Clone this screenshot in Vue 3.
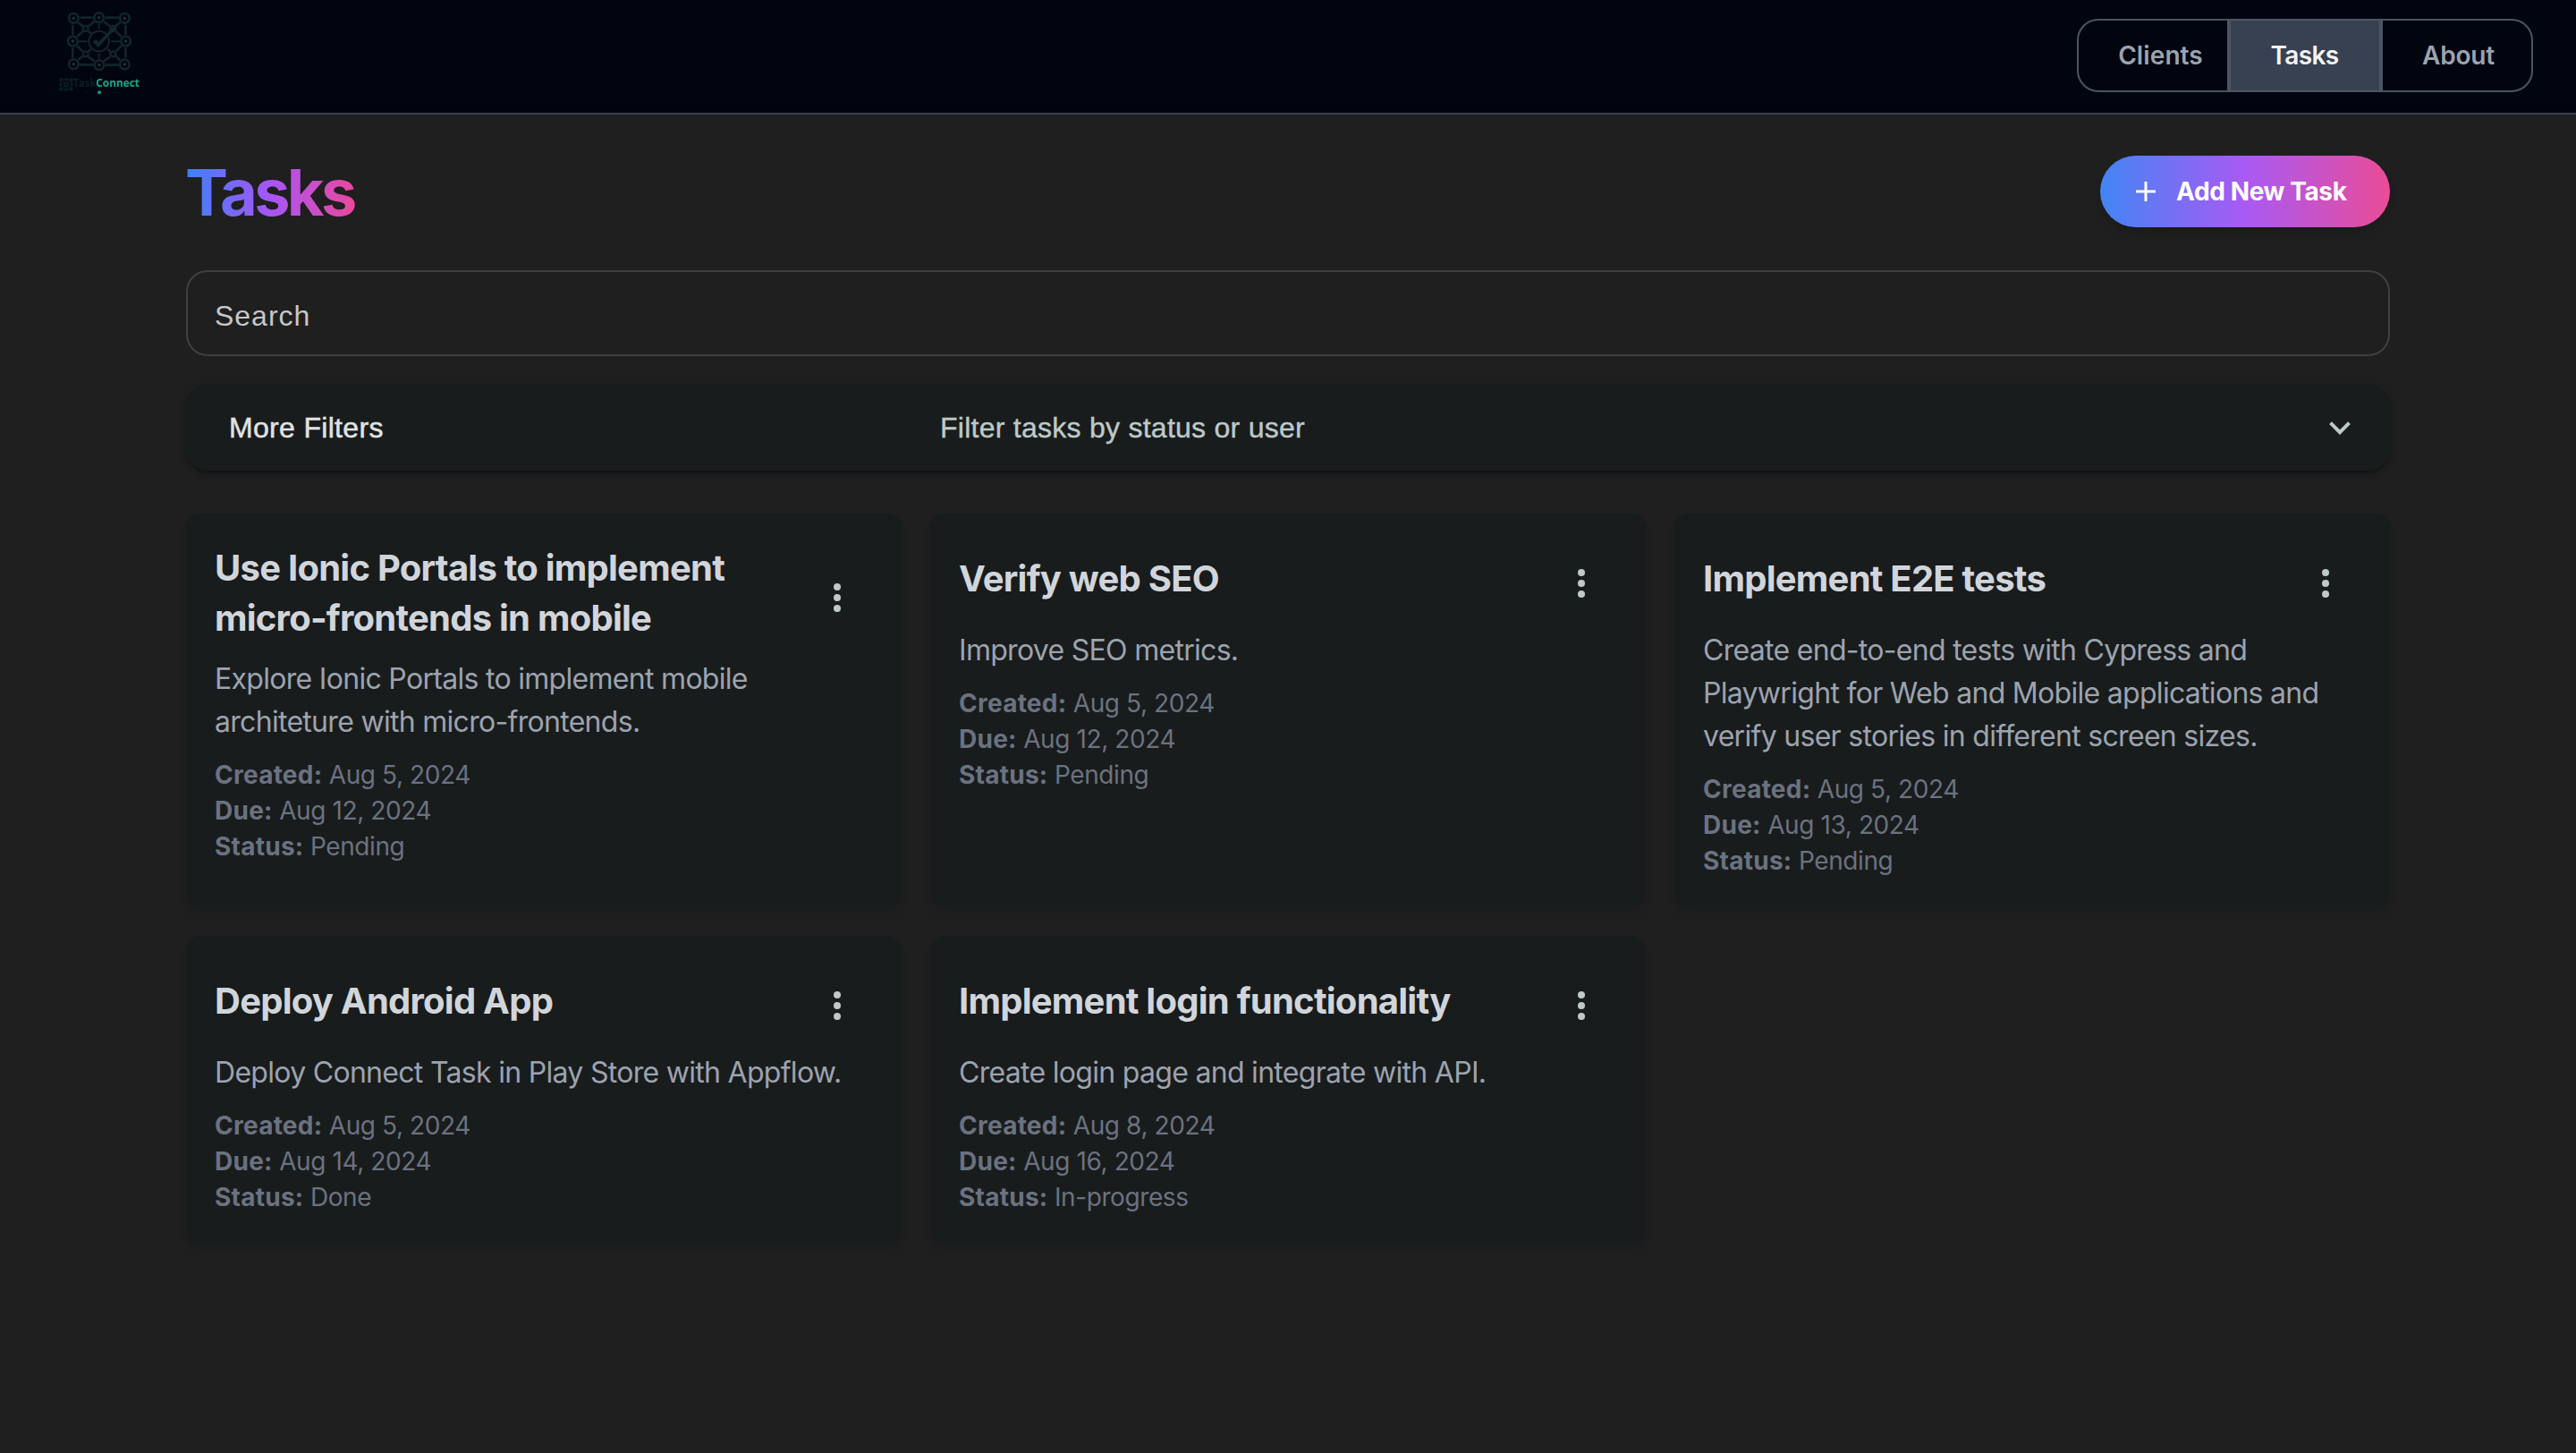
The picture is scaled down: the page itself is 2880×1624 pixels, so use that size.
<script setup>
const navItems = [
  { label: 'Clients', key: 'clients' },
  { label: 'Tasks', key: 'tasks', active: true },
  { label: 'About', key: 'about' },
]

const tasks = [
  {
    title: 'Use Ionic Portals to implement micro-frontends in mobile',
    description: 'Explore Ionic Portals to implement mobile architeture with micro-frontends.',
    created: 'Aug 5, 2024',
    due: 'Aug 12, 2024',
    status: 'Pending',
  },
  {
    title: 'Verify web SEO',
    description: 'Improve SEO metrics.',
    created: 'Aug 5, 2024',
    due: 'Aug 12, 2024',
    status: 'Pending',
  },
  {
    title: 'Implement E2E tests',
    description:
      'Create end-to-end tests with Cypress and Playwright for Web and Mobile applications and verify user stories in different screen sizes.',
    created: 'Aug 5, 2024',
    due: 'Aug 13, 2024',
    status: 'Pending',
  },
  {
    title: 'Deploy Android App',
    description: 'Deploy Connect Task in Play Store with Appflow.',
    created: 'Aug 5, 2024',
    due: 'Aug 14, 2024',
    status: 'Done',
  },
  {
    title: 'Implement login functionality',
    description: 'Create login page and integrate with API.',
    created: 'Aug 8, 2024',
    due: 'Aug 16, 2024',
    status: 'In-progress',
  },
]

const outerNodes = [
  [127, 61], [212, 59], [298, 61],
  [124, 138], [302, 138],
  [127, 215], [213, 218], [298, 216],
]
const innerNodes = [[167, 96], [259, 96], [167, 181], [259, 181]]
const miniNodes = [[84, 267], [102, 266], [120, 267], [84, 283], [120, 283], [84, 300], [102, 301], [120, 300]]
</script>

<template>
  <div class="page">
    <header class="topbar">
      <svg class="logo" viewBox="0 0 420 378" role="img" aria-label="TaskConnect">
        <g fill="none" stroke="#13242b" stroke-width="8">
          <path d="M148 59H191M233 59H278M146 217H192M234 218H278M124 83V116M124 160V194M301 83V116M301 160V194" />
          <path d="M144 139H172M252 139H282M212 80V98M212 179V196" stroke-width="6" />
          <path d="M142 75L159 89M176 88L197 72M228 72L250 88M268 88L283 75M142 200L159 188M176 190L197 205M228 205L250 190M268 189L283 202M138 123L158 105M138 153L158 173M268 105L288 123M268 173L288 153M175 104L186 112M175 172L186 165M250 172L240 165" />
          <circle v-for="([x, y], i) in outerNodes" :key="'o' + i" :cx="x" :cy="y" r="16" />
          <circle v-for="([x, y], i) in innerNodes" :key="'i' + i" :cx="x" :cy="y" r="9" stroke-width="7" />
          <circle cx="212" cy="138" r="34" stroke-width="6" />
        </g>
        <path d="M191 140L201 132L211 141L258 91L268 95L210 159Z" fill="#12282f" />
        <g fill="#1d343b">
          <circle v-for="([x, y], i) in outerNodes" :key="'d' + i" :cx="x" :cy="y" r="5" />
        </g>
        <g fill="none" stroke="#0b222b" stroke-width="3">
          <path d="M84 267H120V300H84ZM84 267L120 300M120 267L84 300" />
          <circle v-for="([x, y], i) in miniNodes" :key="'m' + i" :cx="x" :cy="y" r="4" />
          <circle cx="102" cy="283" r="8" />
        </g>
        <text x="125" y="291" textLength="77" lengthAdjust="spacingAndGlyphs" class="logo-text logo-task">Task</text>
        <text x="202" y="291" textLength="146" lengthAdjust="spacingAndGlyphs" class="logo-text logo-connect">Connect</text>
        <circle cx="213" cy="310" r="6" fill="#1a9580" />
        <path d="M166 310H174M252 310H258M264 310H270M276 310H281" stroke="#0b1c24" stroke-width="3" />
      </svg>
      <nav class="nav">
        <a v-for="n in navItems" :key="n.key" :class="['nav-item', n.key, { active: n.active }]">{{ n.label }}</a>
      </nav>
    </header>

    <main class="content">
      <div class="title-row">
        <h1>Tasks</h1>
        <button class="add" type="button">
          <svg viewBox="0 0 24 24"><path d="M12 1V23M1 12H23" stroke="#fff" stroke-width="3" /></svg>
          <span>Add New Task</span>
        </button>
      </div>

      <div class="search">Search</div>

      <div class="filters">
        <span class="filters-title">More Filters</span>
        <span class="filters-desc">Filter tasks by status or user</span>
        <svg class="chevron" viewBox="0 0 24 15"><path d="M1.5 1.7L12 12.2L22.5 1.7" fill="none" stroke="#bec9c8" stroke-width="4" /></svg>
      </div>

      <section class="grid">
        <article v-for="t in tasks" :key="t.title" class="card">
          <div class="card-head">
            <h2>{{ t.title }}</h2>
            <button class="menu" type="button" aria-label="Task menu">
              <svg viewBox="0 0 8 32"><circle cx="4" cy="4" r="4" /><circle cx="4" cy="16" r="4" /><circle cx="4" cy="28" r="4" /></svg>
            </button>
          </div>
          <p class="desc">{{ t.description }}</p>
          <div class="meta">
            <div><b>Created:</b> {{ t.created }}</div>
            <div><b>Due:</b> {{ t.due }}</div>
            <div><b>Status:</b> {{ t.status }}</div>
          </div>
        </article>
      </section>
    </main>
  </div>
</template>

<style>
body {
  background: #1f1f1f;
}
</style>

<style scoped>
.page {
  min-height: 1624px;
  background: #1f1f1f;
  font-family: Inter, 'Liberation Sans', sans-serif;
}
.topbar {
  box-sizing: border-box;
  height: 128px;
  padding: 0 48px 0 40px;
  display: flex;
  align-items: center;
  justify-content: space-between;
  background: #01050f;
  border-bottom: 2px solid #384152;
}
.logo {
  width: 140px;
  height: 126px;
}
.logo-text {
  font-family: 'Open Sans', sans-serif;
  font-size: 37px;
  font-weight: 700;
}
.logo-task {
  fill: #0b1c24;
}
.logo-connect {
  fill: #1ba389;
}
.nav {
  box-sizing: border-box;
  display: flex;
  width: 510px;
  height: 82px;
  margin-bottom: 2px;
}
.nav-item {
  box-sizing: border-box;
  width: 170px;
  border: 2px solid #4b5563;
  display: flex;
  align-items: center;
  justify-content: center;
  font-size: 28px;
  line-height: 40px;
  font-weight: 600;
  letter-spacing: -0.2px;
  color: #9ca3af;
}
.nav-item.clients {
  border-radius: 24px 0 0 24px;
  padding-left: 17px;
  letter-spacing: 0.1px;
}
.nav-item.about {
  border-radius: 0 24px 24px 0;
  padding-left: 3px;
}
.nav-item.active {
  background: #384152;
  color: #f3f4f6;
  letter-spacing: -0.6px;
  padding-right: 1px;
}
.content {
  width: 2464px;
  margin: 0 auto;
  padding-top: 46px;
}
.title-row {
  display: flex;
  justify-content: space-between;
  align-items: center;
  height: 80px;
}
h1 {
  margin: 2px 0 0 -1px;
  font-size: 72px;
  line-height: 80px;
  font-weight: 700;
  letter-spacing: -3.7px;
  padding-right: 3px;
  background: linear-gradient(to right, #3b82f6, #a855f7, #ec4899);
  -webkit-background-clip: text;
  background-clip: text;
  color: transparent;
}
.add {
  box-sizing: border-box;
  width: 324px;
  height: 80px;
  padding: 0 0 0 39px;
  border: 0;
  border-radius: 40px;
  display: flex;
  align-items: center;
  gap: 22px;
  background: linear-gradient(to right, #4285f4, #a95af4 50%, #ea4c96);
  box-shadow: 0 8px 12px -2px rgba(0, 0, 0, 0.1), 0 4px 8px -4px rgba(0, 0, 0, 0.1);
  color: #fff;
  font: 700 28px/40px Inter, sans-serif;
  letter-spacing: -0.38px;
}
.add svg {
  width: 24px;
  height: 24px;
}
.search {
  box-sizing: border-box;
  height: 96px;
  margin-top: 48px;
  padding: 6px 30px 0;
  border: 2px solid #404040;
  border-radius: 24px;
  display: flex;
  align-items: center;
  font: 400 32px/48px 'Liberation Sans', sans-serif;
  letter-spacing: 0.98px;
  color: #c7c7c7;
}
.filters {
  box-sizing: border-box;
  height: 96px;
  margin-top: 32px;
  padding: 0 44px 0 48px;
  border-radius: 24px;
  display: flex;
  align-items: center;
  background: #191c1c;
  box-shadow: 0 6px 2px -4px rgba(0, 0, 0, 0.2), 0 4px 4px rgba(0, 0, 0, 0.14), 0 2px 10px rgba(0, 0, 0, 0.12);
  font: 400 32px/48px 'Liberation Sans', sans-serif;
}
.filters-title {
  width: 795px;
  color: #e0e3e2;
  letter-spacing: 0.32px;
  -webkit-text-stroke: 0.5px #e0e3e2;
}
.filters-desc {
  flex: 1;
  color: #bec9c8;
  letter-spacing: 0.26px;
  -webkit-text-stroke: 0.4px #bec9c8;
}
.chevron {
  width: 24px;
  height: 15px;
}
.grid {
  display: grid;
  grid-template-columns: repeat(3, 800px);
  gap: 32px;
  margin-top: 48px;
}
.card {
  box-sizing: border-box;
  padding: 33px 32px 32px;
  border-radius: 16px;
  background: #191c1c;
  box-shadow: 0 8px 12px -2px rgba(0, 0, 0, 0.07), 0 4px 8px -4px rgba(0, 0, 0, 0.07);
}
.card-head {
  display: flex;
  align-items: center;
  justify-content: space-between;
  min-height: 80px;
  margin-bottom: 16px;
}
h2 {
  margin: 0;
  flex: 1;
  font-size: 40px;
  line-height: 56px;
  font-weight: 700;
  letter-spacing: -0.76px;
  color: #d1d5db;
}
.menu {
  width: 80px;
  height: 80px;
  padding: 10px 0 0;
  border: 0;
  background: none;
  display: flex;
  align-items: center;
  justify-content: center;
}
.menu svg {
  width: 8px;
  height: 32px;
  fill: #bec9c8;
}
.desc {
  margin: 0 0 15px;
  font-size: 32px;
  line-height: 48px;
  letter-spacing: -0.7px;
  color: #9ca3af;
}
.meta {
  font-size: 28px;
  line-height: 40px;
  letter-spacing: -0.4px;
  color: #6b7280;
}
.meta b {
  font-weight: 700;
  letter-spacing: 0.25px;
}
</style>
